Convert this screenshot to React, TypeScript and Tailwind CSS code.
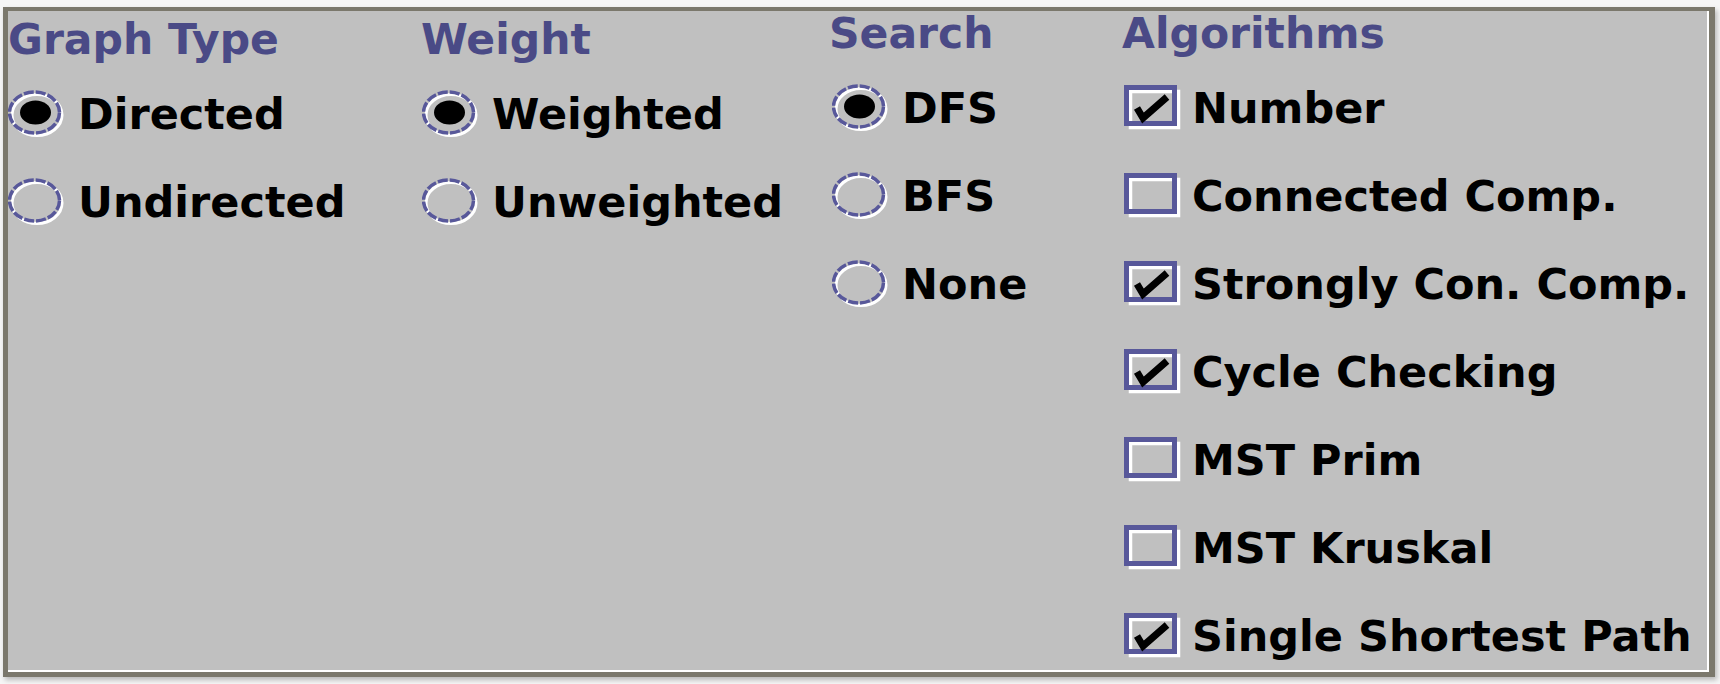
const RING = "#58589a";

function Radio({ checked }: { checked?: boolean }) {
  return (
    <svg width="58" height="48" viewBox="0 0 58 48" className="shrink-0">
      <ellipse cx="29" cy="25" rx="25" ry="20.5" fill="none" stroke="#ffffff" strokeWidth="3" />
      <ellipse
        cx="26.5"
        cy="22.5"
        rx="25"
        ry="20.5"
        fill="none"
        stroke={RING}
        strokeWidth="3.5"
        strokeDasharray="10 2"
      />
      {checked && <ellipse cx="27.5" cy="22.5" rx="15.5" ry="12" fill="#000000" />}
    </svg>
  );
}

function Check({ checked }: { checked?: boolean }) {
  return (
    <svg width="58" height="46" viewBox="0 0 58 46" className="shrink-0">
      <rect x="6.5" y="6.5" width="48" height="36" fill="none" stroke="#ffffff" strokeWidth="3.5" />
      <rect x="2.5" y="2.5" width="48" height="36" fill="none" stroke={RING} strokeWidth="5" />
      {checked && (
        <polyline
          points="13,23 19,33 43,12"
          fill="none"
          stroke="#000000"
          strokeWidth="7"
          strokeLinejoin="miter"
        />
      )}
    </svg>
  );
}

function Heading({ children }: { children: string }) {
  return (
    <div className="h-[50px] leading-[50px] mb-[5px] text-[42.5px] font-bold text-[#4a4a86] whitespace-nowrap">
      {children}
    </div>
  );
}

function RadioRow({ label, checked, offset }: { label: string; checked?: boolean; offset: string }) {
  return (
    <div className="h-[88px] flex items-center gap-[12px] whitespace-nowrap">
      <div className={offset}>
        <Radio checked={checked} />
      </div>
      <span className="text-[43px] leading-none font-bold text-black">{label}</span>
    </div>
  );
}

function CheckRow({ label, checked }: { label: string; checked?: boolean }) {
  return (
    <div className="h-[88px] flex items-center gap-[10px] whitespace-nowrap">
      <div className="ml-[2px]">
        <Check checked={checked} />
      </div>
      <span className="text-[43px] leading-none font-bold text-black">{label}</span>
    </div>
  );
}

const algorithms = [
  { label: "Number", checked: true },
  { label: "Connected Comp.", checked: false },
  { label: "Strongly Con. Comp.", checked: true },
  { label: "Cycle Checking", checked: true },
  { label: "MST Prim", checked: false },
  { label: "MST Kruskal", checked: false },
  { label: "Single Shortest Path", checked: true },
];

export default function App() {
  return (
    <div className="w-[1720px] h-[684px] bg-[#f6f6f6] pt-[7px] pl-[3px] font-['DejaVu_Sans',sans-serif]">
      <div className="w-[1712px] h-[670px] border-t-4 border-l-[5px] border-r-[6px] border-b-[5px] border-[#7b786c] shadow-[2px_3px_5px_rgba(0,0,0,0.25)]">
        <div className="h-full border-r-2 border-b-2 border-white bg-[#c0c0c0] grid grid-cols-[413px_408px_293px_1fr]">
          <div className="pt-[4px]">
            <Heading>Graph Type</Heading>
            <RadioRow label="Directed" checked offset="ml-0" />
            <RadioRow label="Undirected" offset="ml-0" />
          </div>
          <div className="pt-[4px]">
            <Heading>Weight</Heading>
            <RadioRow label="Weighted" checked offset="ml-[1px]" />
            <RadioRow label="Unweighted" offset="ml-[1px]" />
          </div>
          <div className="-mt-[2px]">
            <Heading>Search</Heading>
            <RadioRow label="DFS" checked offset="ml-[3px]" />
            <RadioRow label="BFS" offset="ml-[3px]" />
            <RadioRow label="None" offset="ml-[3px]" />
          </div>
          <div className="-mt-[2px]">
            <Heading>Algorithms</Heading>
            {algorithms.map((a) => (
              <CheckRow key={a.label} label={a.label} checked={a.checked} />
            ))}
          </div>
        </div>
      </div>
    </div>
  );
}
